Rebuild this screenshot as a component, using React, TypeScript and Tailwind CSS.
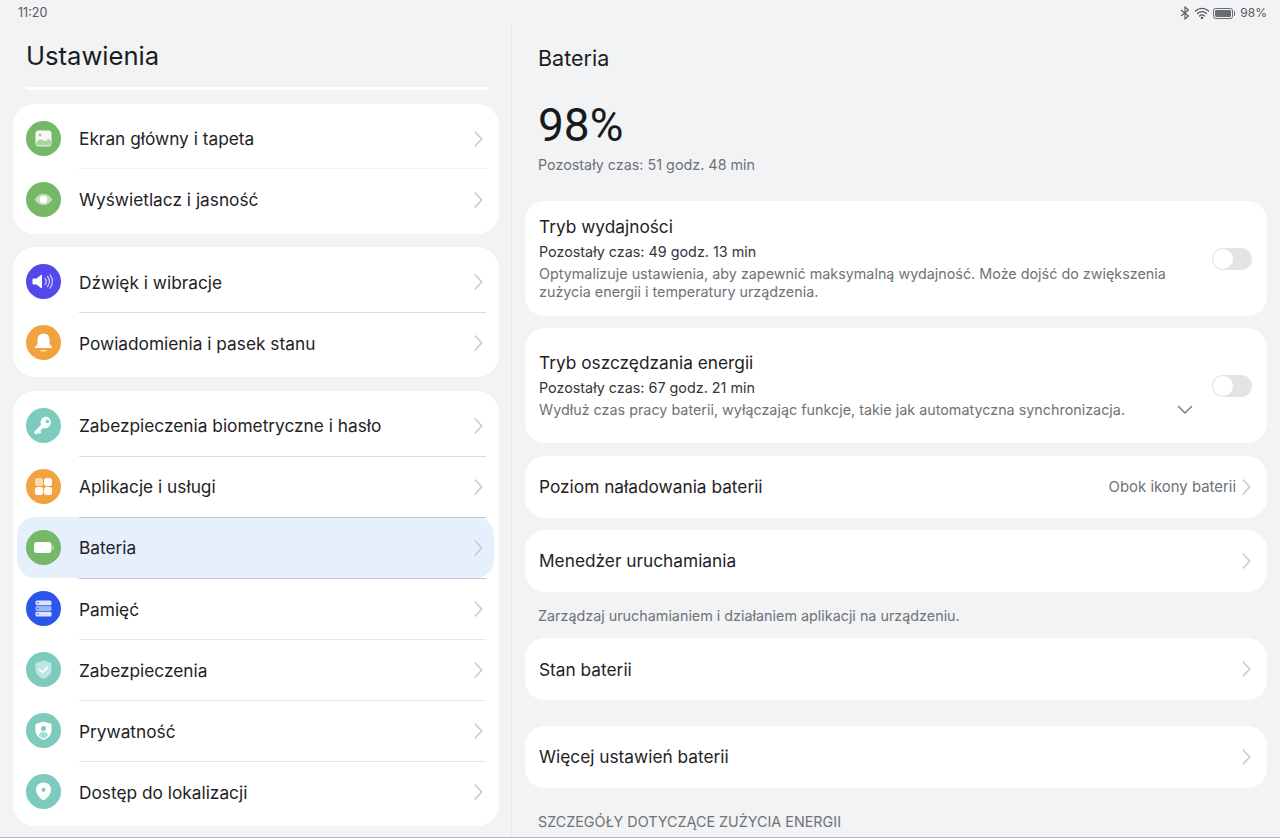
import React from 'react';

const font = 'font-["Inter","Noto_Sans",sans-serif]';

const Chevron = ({ className = 'text-[#c6c8cb]' }: { className?: string }) => (
  <svg width="9" height="16" viewBox="0 0 9 16" fill="none" stroke="currentColor" strokeWidth="1.500" strokeLinecap="round" strokeLinejoin="round" className={className}>
    <path d="M1.200 1 7.800 8l-6.600 7" />
  </svg>
);

const Circle = ({ bg, children }: { bg: string; children: React.ReactNode }) => (
  <div className={`w-[35px] h-[35px] rounded-full flex items-center justify-center shrink-0 ${bg}`}>
    <svg width="35" height="35" viewBox="0 0 35 35">{children}</svg>
  </div>
);

const icons: Record<string, React.ReactNode> = {
  image: (
    <Circle bg="bg-[#74b868]">
      <rect x="9.500" y="9.500" width="16" height="16" rx="3" fill="#fff" opacity="0.92" />
      <circle cx="14" cy="14" r="1.500" fill="#e9a79a" />
      <path d="M10 23.500c0-3 2-5 4.500-5s3.500 1.500 5 1.500 2-2 3-2 2.500 1.500 2.500 3v2.500a1 1 0 0 1-1 1H11a1 1 0 0 1-1-1z" fill="#a9d6a0" />
    </Circle>
  ),
  eye: (
    <Circle bg="bg-[#74b868]">
      <path d="M8.500 17.500c2.500-3.800 5.500-5.500 9-5.500s6.500 1.700 9 5.500c-2.500 3.800-5.500 5.500-9 5.500s-6.500-1.700-9-5.500z" fill="#bfe0b8" />
      <circle cx="17.500" cy="17.500" r="3.800" fill="#fff" />
    </Circle>
  ),
  sound: (
    <Circle bg="bg-[#5548ea]">
      <path d="M7.500 14.500h3l4.500-3.500a.6.6 0 0 1 1 .5v12a.6.6 0 0 1-1 .5L10.500 20.500h-3a1 1 0 0 1-1-1v-4a1 1 0 0 1 1-1z" fill="#fff" />
      <path d="M19 14.500a4.500 4.500 0 0 1 0 6M21.500 12.500a7.500 7.500 0 0 1 0 10M24 10.800a10.500 10.500 0 0 1 0 13.400" fill="none" stroke="#c9c5fa" strokeWidth="1.300" strokeLinecap="round" />
    </Circle>
  ),
  bell: (
    <Circle bg="bg-[#f0a33f]">
      <path d="M17.500 8.500c-3.800 0-6 2.800-6 6.300v4.200l-2.500 3.300v.7h17v-.7L23.500 19v-4.200c0-3.500-2.200-6.300-6-6.300z" fill="#fff" />
      <rect x="14.500" y="25" width="6" height="1.500" rx="0.750" fill="#fbe3c0" />
    </Circle>
  ),
  key: (
    <Circle bg="bg-[#7ccbbd]">
      <path d="M20.500 8.500a6 6 0 0 0-5.500 8.400l-6.300 6.300a1.600 1.600 0 0 0 0 2.300l.3.300a1.600 1.600 0 0 0 2.300 0l1-1 1.500 1.200 1.700-1.700-1.200-1.500 2.700-2.700A6 6 0 1 0 20.500 8.500z" fill="#fff" />
      <circle cx="21.500" cy="13.500" r="1.800" fill="#7ccbbd" />
    </Circle>
  ),
  apps: (
    <Circle bg="bg-[#f0a33f]">
      <rect x="9" y="9" width="8" height="8" rx="2.500" fill="#fbdcb3" />
      <rect x="18" y="9" width="8" height="8" rx="2.500" fill="#fff" />
      <rect x="9" y="18" width="8" height="8" rx="2.500" fill="#fff" />
      <rect x="18" y="18" width="8" height="8" rx="2.500" fill="#fff" />
    </Circle>
  ),
  battery: (
    <Circle bg="bg-[#74b868]">
      <rect x="8" y="12" width="17.500" height="11" rx="3" fill="#fff" />
      <rect x="26.500" y="15.500" width="1.300" height="4" rx="0.600" fill="#bfe0b8" />
    </Circle>
  ),
  storage: (
    <Circle bg="bg-[#2b55ea]">
      <rect x="9.500" y="9.500" width="16" height="4.800" rx="1.500" fill="#dbe4fd" />
      <rect x="9.500" y="15.100" width="16" height="4.800" rx="1.500" fill="#9db4f7" />
      <rect x="9.500" y="20.700" width="16" height="4.800" rx="1.500" fill="#dbe4fd" />
      <circle cx="12" cy="11.900" r="0.800" fill="#2b55ea" />
      <circle cx="12" cy="17.500" r="0.800" fill="#2b55ea" />
      <circle cx="12" cy="23.100" r="0.800" fill="#2b55ea" />
    </Circle>
  ),
  shield: (
    <Circle bg="bg-[#7ccbbd]">
      <path d="M17.500 8.500l8 2.500v6.500c0 4.500-3.200 7.500-8 9.500-4.800-2-8-5-8-9.500V11z" fill="#bde6de" />
      <path d="M13.500 17.500l3 2.800 5-5" fill="none" stroke="#fff" strokeWidth="1.700" strokeLinecap="round" strokeLinejoin="round" />
    </Circle>
  ),
  privacy: (
    <Circle bg="bg-[#7ccbbd]">
      <path d="M17.500 8.500l8 2.500v6.500c0 4.500-3.200 7.500-8 9.500-4.800-2-8-5-8-9.500V11z" fill="#fff" />
      <circle cx="17.500" cy="15.500" r="2.500" fill="#7ccbbd" />
      <path d="M12.800 22.500c.5-2.500 2.300-3.800 4.700-3.800s4.200 1.300 4.700 3.800c-1.300 1.200-2.900 2.200-4.700 3-1.800-.8-3.400-1.800-4.700-3z" fill="#a8ddd2" />
    </Circle>
  ),
  location: (
    <Circle bg="bg-[#7ccbbd]">
      <path d="M17.500 8.500c-4.400 0-7.500 3.200-7.500 7.300 0 4 3.300 7.800 6.600 10.300a1.500 1.500 0 0 0 1.800 0c3.300-2.500 6.600-6.300 6.600-10.300 0-4.100-3.100-7.300-7.500-7.300z" fill="#fff" />
      <circle cx="17.500" cy="15.800" r="2" fill="#7ccbbd" />
    </Circle>
  ),
};

const MenuRow = ({ icon, label, selected, divider, low, tight }: { icon: string; label: string; selected?: boolean; divider?: string; low?: boolean; tight?: boolean }) => (
  <div className={`relative h-[61px] flex items-center pl-[13px] ${selected ? 'z-10' : ''}`}>
    {selected && <div className="absolute left-1 right-[5px] top-0 bottom-0 bg-[#e6f0fc] rounded-[18px]" />}
    <div className="relative">{icons[icon]}</div>
    <div className="relative flex-1 h-full ml-[18px] mr-[13px] flex items-center justify-between">
      <span className={`text-[17.3px] text-[#1f2226] ${tight ? '' : 'pt-[2px]'}`}>{label}</span>
      <div className="mr-[3px]"><Chevron /></div>
      {divider && <div className={`absolute left-0 right-0 h-px z-20 ${low ? '-bottom-px' : 'bottom-0'} ${divider}`} />}
    </div>
  </div>
);

const Toggle = () => (
  <div className="w-[40px] h-[22px] rounded-full bg-[#e3e4e6] p-[1px] shrink-0">
    <div className="w-5 h-5 rounded-full bg-white" />
  </div>
);

const SimpleCard = ({ title, value, low }: { title: string; value?: string; low?: boolean }) => (
  <div className="h-[62px] bg-white rounded-[20px] flex items-center justify-between pl-[14px] pr-[16px]">
    <span className={`text-[17.3px] text-[#1f2226] ${low ? 'pt-[2px]' : ''}`}>{title}</span>
    <div className="flex items-center gap-[6px]">
      {value && <span className="text-[14.9px] text-[#6f7276]">{value}</span>}
      <Chevron />
    </div>
  </div>
);

export default function App() {
  return (
    <div className={`w-[1280px] h-[838px] bg-[#f1f3f5] overflow-hidden flex flex-col border-b border-[#b5b7ba] ${font}`}>
      <div className="h-[26px] shrink-0 flex items-center justify-between pl-[18px] pr-[13px]">
        <span className="text-[12.5px] text-[#55585c]">11:20</span>
        <div className="flex items-center text-[#55585c]">
          <svg width="10" height="14" viewBox="0 0 10 14" fill="none" stroke="currentColor" strokeWidth="1.100">
            <path d="M1 4l7.500 6L5 13V1l3.500 3L1 10" />
          </svg>
          <svg width="16" height="12" viewBox="0 0 15 12" fill="none" stroke="currentColor" strokeWidth="1.200" strokeLinecap="round" className="ml-1">
            <path d="M1 4a9.500 9.500 0 0 1 13 0M3 6.500a6.500 6.500 0 0 1 9 0M5 9a3.500 3.500 0 0 1 5 0" />
            <circle cx="7.500" cy="11" r="0.700" fill="currentColor" />
          </svg>
          <div className="flex items-center gap-[1px] ml-[3px]">
            <div className="w-[20px] h-[11px] rounded-[2.500px] border border-[#6a6d70] p-[1px]">
              <div className="w-full h-full rounded-[1px] bg-[#6a6d70]" />
            </div>
            <div className="w-[1.500px] h-[5px] bg-[#6a6d70]" />
          </div>
          <span className="text-[12px] ml-[5px]">98%</span>
        </div>
      </div>

      <div className="flex-1 flex min-h-0">
        <div className="w-[512px] shrink-0 border-r border-[#e6e8ea] pl-[13px] pr-[12px]">
          <h1 className="text-[25.6px] leading-[32px] mt-[14px] ml-[13px] text-[#1b1d20]">Ustawienia</h1>
          <div className="h-[3px] bg-white rounded-full ml-[13px] mr-[11px] mt-[15px]" />
          <div className="bg-white rounded-[22px] py-1 mt-[14px]">
            <MenuRow icon="image" label="Ekran główny i tapeta" divider="bg-[#f0f1f2]" tight />
            <MenuRow icon="eye" label="Wyświetlacz i jasność" tight />
          </div>
          <div className="bg-white rounded-[22px] py-1 mt-[13px]">
            <MenuRow icon="sound" label="Dźwięk i wibracje" divider="bg-[#dcdde0]" low />
            <MenuRow icon="bell" label="Powiadomienia i pasek stanu" />
          </div>
          <div className="bg-white rounded-[22px] py-1 mt-[14px]">
            <MenuRow icon="key" label="Zabezpieczenia biometryczne i hasło" divider="bg-[#dcdde0]" low tight />
            <MenuRow icon="apps" label="Aplikacje i usługi" divider="bg-[#c3c8ce]" low tight />
            <MenuRow icon="battery" label="Bateria" selected divider="bg-[#c3c8ce]" low tight />
            <MenuRow icon="storage" label="Pamięć" divider="bg-[#e6e7e9]" low />
            <MenuRow icon="shield" label="Zabezpieczenia" divider="bg-[#e6e7e9]" low />
            <MenuRow icon="privacy" label="Prywatność" divider="bg-[#e6e7e9]" low />
            <MenuRow icon="location" label="Dostęp do lokalizacji" />
          </div>
        </div>

        <div className="flex-1 pl-[13px] pr-[13px] min-w-0">
          <h2 className="text-[21.500px] leading-[28px] mt-[18px] ml-[13px] text-[#1b1d20]">Bateria</h2>
          <div className="font-['Roboto',sans-serif] text-[46px] leading-[56px] font-normal mt-[25px] ml-[13px] text-[#17191c]">98%</div>
          <div className="text-[14.35px] leading-5 mt-[2px] ml-[13px] text-[#6f7276]">Pozostały czas: 51 godz. 48 min</div>

          <div className="h-[115px] bg-white rounded-[20px] mt-[26px] flex items-center pl-[14px] pr-[15px]">
            <div className="flex-1 min-w-0 self-start pt-[14px]">
              <div className="text-[17.3px] leading-6 text-[#1f2226]">Tryb wydajności</div>
              <div className="text-[14.35px] leading-5 mt-[3px] text-[#33363a]">Pozostały czas: 49 godz. 13 min</div>
              <div className="text-[14.35px] leading-[18px] mt-[3px] text-[#6f7276] max-w-[640px]">
                Optymalizuje ustawienia, aby zapewnić maksymalną wydajność. Może dojść do zwiększenia zużycia energii i temperatury urządzenia.
              </div>
            </div>
            <Toggle />
          </div>

          <div className="h-[115px] bg-white rounded-[20px] mt-[12px] flex items-center pl-[14px] pr-[15px]">
            <div className="flex-1 min-w-0 self-start pt-[23px]">
              <div className="text-[17.3px] leading-6 text-[#1f2226]">Tryb oszczędzania energii</div>
              <div className="text-[14.35px] leading-5 mt-[3px] text-[#33363a]">Pozostały czas: 67 godz. 21 min</div>
              <div className="flex items-center justify-between mt-[2px] pr-[19px]">
                <span className="text-[14.35px] leading-5 text-[#6f7276]">Wydłuż czas pracy baterii, wyłączając funkcje, takie jak automatyczna synchronizacja.</span>
                <svg width="16" height="10" viewBox="0 0 16 10" fill="none" stroke="#7c7f83" strokeWidth="1.500" strokeLinecap="round" strokeLinejoin="round">
                  <path d="M1.500 1.500 8 8l6.500-6.500" />
                </svg>
              </div>
            </div>
            <Toggle />
          </div>

          <div className="mt-[13px]"><SimpleCard title="Poziom naładowania baterii" value="Obok ikony baterii" /></div>
          <div className="mt-[12px]"><SimpleCard title="Menedżer uruchamiania" /></div>
          <div className="text-[14.35px] leading-5 mt-[14px] ml-[13px] text-[#6f7276]">Zarządzaj uruchamianiem i działaniem aplikacji na urządzeniu.</div>
          <div className="mt-[12px]"><SimpleCard title="Stan baterii" low /></div>
          <div className="mt-[26px]"><SimpleCard title="Więcej ustawień baterii" /></div>
          <div className="text-[14.35px] leading-5 mt-[24px] ml-[13px] text-[#6f7276]">SZCZEGÓŁY DOTYCZĄCE ZUŻYCIA ENERGII</div>
        </div>
      </div>
    </div>
  );
}
